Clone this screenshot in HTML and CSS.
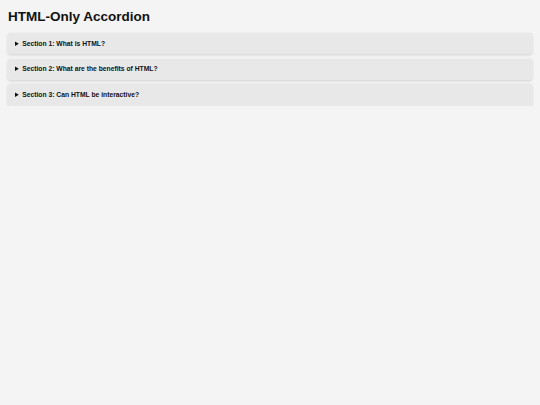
FILE: index.html
```html
<!DOCTYPE html>
<html lang="en">
<head>
    <meta charset="UTF-8">
    <meta name="viewport" content="width=device-width, initial-scale=1.0">
    <title>HTML-Only Accordion</title>
    <link rel="stylesheet" href="styles.css">
</head>
<body>
    <h1>HTML-Only Accordion</h1>
    <div class="accordion">
        <details class="item">
            <summary>Section 1: What is HTML?</summary>
            <div class="content">HTML is the standard markup language for creating web pages.</div>
        </details>
        <details class="item">
            <summary>Section 2: What are the benefits of HTML?</summary>
            <div class="content">It is simple, widely supported and works in every browser.</div>
        </details>
        <details class="item">
            <summary>Section 3: Can HTML be interactive?</summary>
            <div class="content">Yes, elements like details and summary work without any script.</div>
        </details>
    </div>
</body>
</html>
```

FILE: styles.css
```css
*, *:before, *:after {
    box-sizing: border-box;
}

body {
    margin: 0;
    padding: 0 8px;
    background-color: #f4f4f4;
    font-family: "Liberation Sans", Arial, sans-serif;
    color: #111;
}

h1 {
    font-size: 13.5px;
    margin: 8.5px 0 9.3px;
}

.accordion {
    display: flex;
    flex-direction: column;
    gap: 4.3px;
}

.item {
    background-color: #e8e8e8;
    border-radius: 2px;
    box-shadow: 0 1px 3px rgba(0, 0, 0, 0.15);
}

summary {
    padding: 6.75px 7px;
    font-size: 6.75px;
    line-height: 8px;
    font-weight: bold;
    cursor: pointer;
}

.content {
    padding: 0 7px 7px;
    font-size: 6.75px;
}
```
